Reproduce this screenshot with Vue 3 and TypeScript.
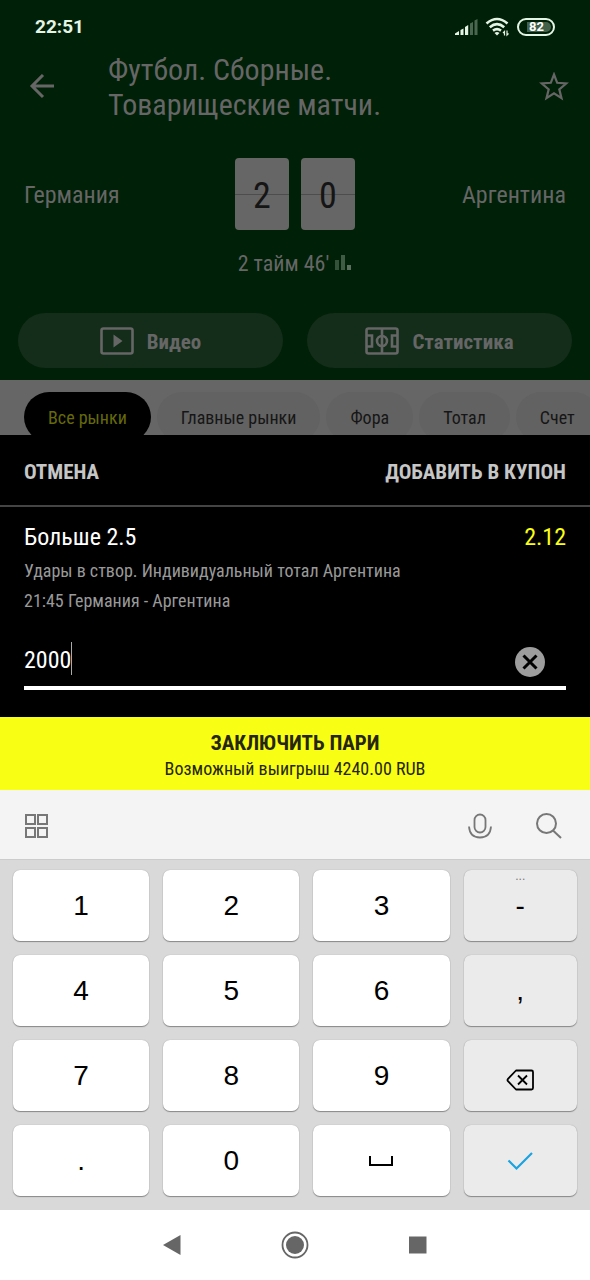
<script setup lang="ts">
import { ref } from 'vue'

interface Key {
  id: string
  label: string
  side?: boolean
  icon?: 'space' | 'erase' | 'done'
}

const markets: string[] = ['Все рынки', 'Главные рынки', 'Фора', 'Тотал', 'Счет']
const activeMarket = ref<string>('Все рынки')
const stake = ref<string>('2000')

const keys: Key[] = [
  { id: '1', label: '1' },
  { id: '2', label: '2' },
  { id: '3', label: '3' },
  { id: 'minus', label: '-', side: true },
  { id: '4', label: '4' },
  { id: '5', label: '5' },
  { id: '6', label: '6' },
  { id: 'comma', label: ',', side: true },
  { id: '7', label: '7' },
  { id: '8', label: '8' },
  { id: '9', label: '9' },
  { id: 'erase', label: '', side: true, icon: 'erase' },
  { id: 'dot', label: '.' },
  { id: '0', label: '0' },
  { id: 'space', label: '', icon: 'space' },
  { id: 'done', label: '', side: true, icon: 'done' },
]

function press(key: Key): void {
  if (key.icon === 'erase') stake.value = stake.value.slice(0, -1)
  else if (!key.icon) stake.value += key.label
}
</script>

<template>
  <div class="screen">
    <header class="match">
      <div class="status">
        <span class="clock">22:51</span>
        <div class="status-icons">
          <svg class="signal" width="24" height="18" viewBox="0 0 24 18">
            <path d="M0 17v-1.500L4 13V17zM5.500 12l3-1.500V17h-3zM10 9l3.200-2v10H10z" fill="#e4f5e6" />
            <path d="M15 5.500 18 4v13h-3zM19.500 2.500 22.500 1v16h-3z" fill="#4b6650" />
          </svg>
          <svg class="wifi" width="26" height="20" viewBox="0 0 26 20" fill="none" stroke="#e4f5e6" stroke-width="2.600">
            <path d="M1.500 6.500Q12 -2.500 22.500 6.500M4.800 10.200Q12 4.200 19.200 10.200M8 13.600Q12 10.600 16 13.600" />
            <path d="M12 18.500 9.500 16Q12 14 14.500 16z" fill="#e4f5e6" stroke="none" />
            <path d="M19.500 18.500v-4l-1.500 1.500M22 13.500v4.500l1.500-1.500" stroke-width="1.200" />
          </svg>
          <span class="battery"><span class="battery-level">82</span></span>
        </div>
      </div>

      <div class="title-bar">
        <button class="icon-button" aria-label="Назад">
          <svg width="26" height="26" viewBox="0 0 26 26" fill="none" stroke="#666" stroke-width="3">
            <path d="M25 12H3M14 1 3 12l11 11" />
          </svg>
        </button>
        <h1>Футбол. Сборные.<br />Товарищеские матчи.</h1>
        <button class="icon-button" aria-label="В избранное">
          <svg width="30" height="30" viewBox="0 0 30 30" fill="none" stroke="#666" stroke-width="2.200">
            <path d="M15 2.500l3.200 8.300 9 .700-6.900 5.800 2.200 8.900L15 21.400l-7.500 4.800 2.200-8.900-6.900-5.800 9-.700z" />
          </svg>
        </button>
      </div>

      <div class="teams">
        <span class="team">Германия</span>
        <div class="score">
          <span class="digit">2</span>
          <span class="digit">0</span>
        </div>
        <span class="team away">Аргентина</span>
      </div>

      <div class="period">
        <span>2 тайм 46'</span>
        <svg width="18" height="18" viewBox="0 0 18 18">
          <path d="M1 5h4v10H1z" fill="#34513a" />
          <path d="M7 0h4v15H7z" fill="#3f5b44" />
          <path d="M13 10h4v5h-4z" fill="#5b6f5f" />
        </svg>
      </div>

      <div class="actions">
        <button class="action">
          <svg width="34" height="28" viewBox="0 0 34 28" fill="none" stroke="#666" stroke-width="2.600">
            <rect x="1.500" y="1.500" width="31" height="25" rx="2" />
            <path d="M13.500 7.500v13l9-6.500z" fill="#666" stroke="none" />
          </svg>
          <span>Видео</span>
        </button>
        <button class="action">
          <svg width="34" height="28" viewBox="0 0 34 28" fill="none" stroke="#666" stroke-width="2.600">
            <rect x="1.500" y="1.500" width="31" height="25" rx="2" />
            <path d="M17 2v24M2 8.500h5v11H2M32 8.500h-5v11h5" />
            <circle cx="17" cy="14" r="5" />
          </svg>
          <span>Статистика</span>
        </button>
      </div>
    </header>

    <nav class="markets">
      <button
        v-for="market in markets"
        :key="market"
        class="chip"
        :class="{ active: market === activeMarket }"
        @click="activeMarket = market"
      >
        {{ market }}
      </button>
    </nav>

    <section class="sheet">
      <div class="sheet-actions">
        <button>ОТМЕНА</button>
        <button>ДОБАВИТЬ В КУПОН</button>
      </div>
      <div class="bet">
        <div class="outcome">
          <span>Больше 2.5</span>
          <span class="odds">2.12</span>
        </div>
        <p>Удары в створ. Индивидуальный тотал Аргентина</p>
        <p>21:45 Германия - Аргентина</p>
        <div class="stake">
          <input v-model="stake" class="amount" type="text" inputmode="numeric" aria-label="Сумма" />
          <span class="caret"></span>
          <button class="clear" aria-label="Очистить" @click="stake = ''">
            <svg width="32" height="32" viewBox="0 0 32 32">
              <circle cx="16" cy="16" r="15" fill="#9d9d9d" />
              <path d="M9.500 9.500l13 13M22.500 9.500l-13 13" stroke="#000" stroke-width="3" />
            </svg>
          </button>
        </div>
      </div>
    </section>

    <button class="place">
      <strong>ЗАКЛЮЧИТЬ ПАРИ</strong>
      <span>Возможный выигрыш 4240.00 RUB</span>
    </button>

    <div class="toolbar">
      <button aria-label="Меню клавиатуры">
        <svg width="26" height="26" viewBox="0 0 26 26" fill="none" stroke="#777" stroke-width="2">
          <rect x="2" y="2" width="9" height="9" />
          <rect x="14" y="2" width="9" height="9" />
          <rect x="2" y="15" width="9" height="9" />
          <rect x="14" y="15" width="9" height="9" />
        </svg>
      </button>
      <button class="mic" aria-label="Голосовой ввод">
        <svg width="26" height="26" viewBox="0 0 26 26" fill="none" stroke="#777" stroke-width="1.800">
          <rect x="7.500" y="1.500" width="11" height="18" rx="5.500" />
          <path d="M2 13.500C2.500 21 7 24.500 13 24.500S23.500 21 24 13.500" />
        </svg>
      </button>
      <button aria-label="Поиск">
        <svg width="28" height="28" viewBox="0 0 28 28" fill="none" stroke="#777" stroke-width="2">
          <circle cx="11.500" cy="11.500" r="9.500" />
          <path d="M18 18.500l8 7.500" />
        </svg>
      </button>
    </div>

    <div class="keyboard">
      <button
        v-for="key in keys"
        :key="key.id"
        class="key"
        :class="{ side: key.side }"
        :aria-label="key.icon"
        @click="press(key)"
      >
        <span v-if="key.id === 'minus'" class="more">...</span>
        <svg v-if="key.icon === 'erase'" class="low" width="28" height="22" viewBox="0 0 28 22" fill="none" stroke="#000" stroke-width="1.800" stroke-linejoin="round">
          <path d="M10 1.500h15.500Q27 1.500 27 3v16q0 1.500-1.500 1.500H10L2 12.200Q1 11 2 9.800zM12 6.500l9 9M21 6.500l-9 9" />
        </svg>
        <svg v-else-if="key.icon === 'space'" width="26" height="12" viewBox="0 0 26 12" fill="none" stroke="#000" stroke-width="2">
          <path d="M2 1v9h22V1" />
        </svg>
        <svg v-else-if="key.icon === 'done'" width="26" height="20" viewBox="0 0 26 20" fill="none" stroke="#1aa3e0" stroke-width="2.200">
          <path d="M1.500 9.500l8 8L25 2" />
        </svg>
        <template v-else>{{ key.label }}</template>
      </button>
    </div>

    <nav class="system">
      <button aria-label="Назад">
        <svg width="20" height="20" viewBox="0 0 20 20"><path d="M18.500 0v20L1 10z" fill="#666" /></svg>
      </button>
      <button aria-label="Домой">
        <svg width="28" height="28" viewBox="0 0 28 28">
          <circle cx="14" cy="14" r="12.500" fill="none" stroke="#666" stroke-width="1.800" />
          <circle cx="14" cy="14" r="9" fill="#666" />
        </svg>
      </button>
      <button aria-label="Недавние">
        <svg width="20" height="20" viewBox="0 0 20 20"><path d="M1 1.500h17.500v17H1z" fill="#666" /></svg>
      </button>
    </nav>
  </div>
</template>

<style>
body {
  margin: 0;
  background: #fff;
}
</style>

<style scoped>
.screen {
  display: flex;
  flex-direction: column;
  min-height: 100vh;
  overflow: hidden;
  font-family: 'Roboto Condensed', 'Liberation Sans Narrow', Roboto, sans-serif;
}

button {
  display: flex;
  align-items: center;
  justify-content: center;
  padding: 0;
  border: 0;
  background: none;
  color: inherit;
  font: inherit;
  white-space: nowrap;
}

svg {
  flex: none;
  display: block;
}

.match {
  padding-bottom: 12px;
  background: #002007;
  color: #666;
}

.status {
  display: flex;
  align-items: center;
  justify-content: space-between;
  height: 54px;
  padding: 0 35px;
}

.clock {
  color: #e4f5e6;
  font: 700 19px/24px Roboto, sans-serif;
}

.status-icons {
  display: flex;
  align-items: center;
  gap: 6px;
}

.battery {
  box-sizing: border-box;
  display: flex;
  width: 38px;
  height: 18px;
  padding: 2px 2px 2px 8px;
  border: 2px solid #e4f5e6;
  border-radius: 9px;
}

.battery-level {
  flex: 1;
  padding-left: 2px;
  border-radius: 0 6px 6px 0;
  background: #43604a;
  color: #fff;
  font: 700 13px/10px Roboto, sans-serif;
}

.title-bar {
  display: flex;
  align-items: center;
  height: 66px;
  padding: 0 21px 0 29px;
}

h1 {
  flex: 1;
  margin: 0;
  padding-left: 53px;
  font-size: 30px;
  font-weight: 400;
  line-height: 35px;
}

.teams {
  display: grid;
  grid-template-columns: 1fr auto 1fr;
  align-items: center;
  margin-top: 38px;
  padding: 0 24px;
  font-size: 24px;
}

.team {
  padding-top: 2px;
}

.away {
  text-align: right;
}

.score {
  display: flex;
  gap: 12px;
}

.digit {
  box-sizing: border-box;
  width: 54px;
  height: 72px;
  padding-top: 2px;
  border-radius: 4px;
  background: linear-gradient(#666 36px, #4d4d4d 36px, #4d4d4d 37px, #666 37px);
  color: #151515;
  font-size: 36px;
  line-height: 72px;
  text-align: center;
}

.period {
  display: flex;
  align-items: center;
  justify-content: center;
  gap: 5px;
  margin-top: 20px;
  font-size: 22px;
  line-height: 28px;
}

.actions {
  display: grid;
  grid-template-columns: 1fr 1fr;
  gap: 24px;
  margin-top: 35px;
  padding: 0 18px;
}

.action {
  gap: 13px;
  height: 55px;
  border-radius: 28px;
  background: #132d1a;
  font-size: 21px;
  font-weight: 700;
}

.action span {
  padding-top: 2px;
}

.markets {
  display: flex;
  gap: 6px;
  height: 43px;
  padding: 12px 0 0 24px;
  overflow: hidden;
  background: #666;
}

.chip {
  flex: none;
  height: 50px;
  padding: 0 24px;
  border-radius: 25px;
  background: #626262;
  color: #161616;
  font-size: 18px;
}

.chip.active {
  background: #000;
  color: #66690a;
}

.sheet {
  background: #000;
}

.sheet-actions {
  display: flex;
  justify-content: space-between;
  height: 66px;
  padding: 4px 24px 0;
  border-bottom: 2px solid #444;
  color: #c6c6c6;
  font-size: 21px;
  font-weight: 700;
}

.bet {
  padding: 13px 24px 27px;
}

.outcome {
  display: flex;
  justify-content: space-between;
  color: #fff;
  font-size: 24px;
  line-height: 34px;
}

.odds {
  color: #f9ff14;
}

.bet p {
  margin: 0;
  color: #999;
  font-size: 18px;
  line-height: 30px;
}

.bet p:first-of-type {
  margin-top: 2px;
}

.stake {
  box-sizing: border-box;
  display: flex;
  align-items: center;
  height: 64px;
  margin-top: 10px;
  padding-top: 4px;
  border-bottom: 4px solid #fff;
}

.amount {
  field-sizing: content;
  padding: 3px 0 0;
  border: 0;
  outline: 0;
  background: none;
  color: #fff;
  font: inherit;
  font-size: 24px;
}

.caret {
  width: 1px;
  height: 33px;
  background: #aaa;
}

.clear {
  margin: 7px 20px 0 auto;
}

.place {
  flex-direction: column;
  height: 73px;
  padding-top: 2px;
  background: #f9ff14;
  color: #26260f;
}

.place strong {
  font-size: 21px;
  line-height: 28px;
}

.place span {
  font-size: 18px;
  line-height: 24px;
}

.toolbar {
  display: flex;
  align-items: center;
  height: 67px;
  padding: 2px 27px 0 24px;
  border-bottom: 1px solid #ccc;
  background: #f4f4f4;
}

.mic {
  margin: 0 42px 0 auto;
}

.keyboard {
  display: grid;
  grid-template-columns: 6fr 6fr 6fr 5fr;
  gap: 14px;
  padding: 10px 13px 14px;
  background: #d9d9d9;
}

.key {
  position: relative;
  height: 71px;
  border-radius: 7px;
  background: #fff;
  box-shadow: 0 1px 1px #888, 0 0 1px #999;
  color: #000;
  font: 28px/36px 'Liberation Sans', Arial, sans-serif;
}

.key.side {
  background: #ebebeb;
}

.more {
  position: absolute;
  top: 0;
  color: #777;
  font-size: 12px;
  line-height: 12px;
}

.low {
  margin-top: 8px;
}

.system {
  display: flex;
  flex: 1;
  align-items: center;
  justify-content: center;
  gap: 99px;
  min-height: 68px;
  background: #fff;
}
</style>
